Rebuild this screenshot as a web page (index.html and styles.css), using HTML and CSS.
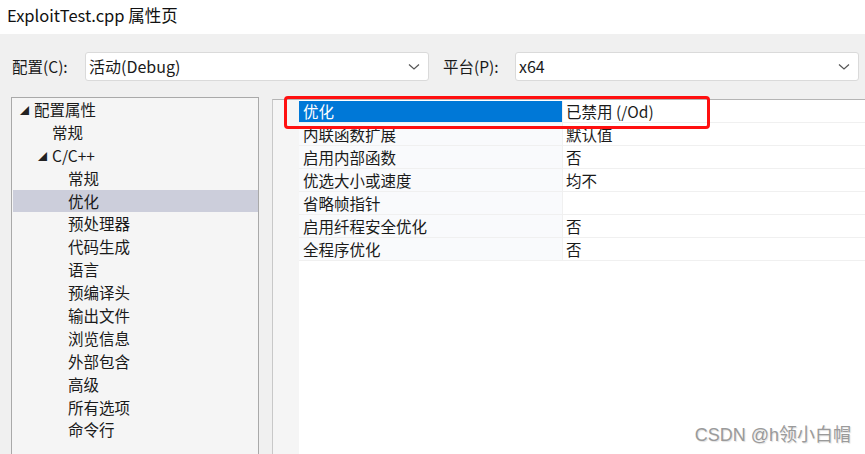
FILE: index.html
```html
<!DOCTYPE html>
<html lang="zh-CN">
<head>
    <meta charset="UTF-8">
    <title>ExploitTest.cpp 属性页</title>
    <link rel="stylesheet" href="styles.css">
</head>
<body>
    <div class="title-bar">ExploitTest.cpp 属性页</div>

    <div class="dialog">
        <div class="config-row">
            <label class="config-label">配置(C):</label>
            <div class="combo combo-config">
                <span>活动(Debug)</span>
                <svg class="chevron" width="12" height="8" viewBox="0 0 12 8"><path d="M1 1.5 L6 6 L11 1.5" fill="none" stroke="#555" stroke-width="1.2"/></svg>
            </div>
            <label class="config-label platform-label">平台(P):</label>
            <div class="combo combo-platform">
                <span>x64</span>
                <svg class="chevron" width="12" height="8" viewBox="0 0 12 8"><path d="M1 1.5 L6 6 L11 1.5" fill="none" stroke="#555" stroke-width="1.2"/></svg>
            </div>
        </div>

        <div class="panels">
            <ul class="tree">
                <li class="lvl0"><span class="arrow">◢</span>配置属性</li>
                <li class="lvl1">常规</li>
                <li class="lvl1"><span class="arrow">◢</span>C/C++</li>
                <li class="lvl2">常规</li>
                <li class="lvl2 active">优化</li>
                <li class="lvl2">预处理器</li>
                <li class="lvl2">代码生成</li>
                <li class="lvl2">语言</li>
                <li class="lvl2">预编译头</li>
                <li class="lvl2">输出文件</li>
                <li class="lvl2">浏览信息</li>
                <li class="lvl2">外部包含</li>
                <li class="lvl2">高级</li>
                <li class="lvl2">所有选项</li>
                <li class="lvl2">命令行</li>
            </ul>

            <div class="grid">
                <div class="prop-row selected">
                    <div class="gutter"></div>
                    <div class="prop-name">优化</div>
                    <div class="prop-value">已禁用 (/Od)</div>
                </div>
                <div class="prop-row">
                    <div class="gutter"></div>
                    <div class="prop-name">内联函数扩展</div>
                    <div class="prop-value">默认值</div>
                </div>
                <div class="prop-row">
                    <div class="gutter"></div>
                    <div class="prop-name">启用内部函数</div>
                    <div class="prop-value">否</div>
                </div>
                <div class="prop-row">
                    <div class="gutter"></div>
                    <div class="prop-name">优选大小或速度</div>
                    <div class="prop-value">均不</div>
                </div>
                <div class="prop-row">
                    <div class="gutter"></div>
                    <div class="prop-name">省略帧指针</div>
                    <div class="prop-value"></div>
                </div>
                <div class="prop-row">
                    <div class="gutter"></div>
                    <div class="prop-name">启用纤程安全优化</div>
                    <div class="prop-value">否</div>
                </div>
                <div class="prop-row">
                    <div class="gutter"></div>
                    <div class="prop-name">全程序优化</div>
                    <div class="prop-value">否</div>
                </div>
                <div class="grid-rest"></div>
                <div class="highlight-box"></div>
            </div>
        </div>

        <div class="watermark">CSDN @h领小白帽</div>
    </div>
</body>
</html>
```

FILE: styles.css
```css
html, body {
    margin: 0;
    height: 100%;
    overflow: hidden;
}
body {
    font-family: "Noto Sans CJK SC", "Liberation Sans", sans-serif;
    color: #1a1a1a;
    background-color: #f0f0f0;
    width: 865px;
}
.title-bar {
    height: 34px;
    line-height: 31px;
    padding-left: 7px;
    font-size: 16.5px;
    background-color: #fff;
    color: #111;
}
.dialog {
    position: relative;
    height: 420px;
    background-color: #f0f0f0;
}
.config-row {
    display: flex;
    align-items: center;
    padding-top: 18px;
    height: 29px;
}
.config-label {
    font-size: 15.5px;
    margin-left: 12px;
    width: 73px;
    margin-top: -2px;
}
.platform-label {
    margin-left: 14px;
    width: 72px;
}
.combo {
    box-sizing: border-box;
    height: 29px;
    background-color: #fff;
    border: 1px solid #dadada;
    border-radius: 3px;
    display: flex;
    align-items: center;
    justify-content: space-between;
    padding: 0 8px 0 3px;
    font-size: 16px;
}
.combo span {
    margin-top: -2px;
}
.combo-config {
    width: 344px;
}
.combo-platform {
    width: 344px;
}
.chevron {
    margin-top: 1px;
}
.panels {
    display: flex;
    margin-top: 16px;
    align-items: flex-start;
}
.tree {
    list-style: none;
    margin: 0 0 0 11px;
    padding: 0 0 22px 1px;
    width: 245px;
    height: 340px;
    background-color: #f5f5f5;
    border: 1px solid #a9a9a9;
    font-size: 15.5px;
}
.tree li {
    height: 22.9px;
    line-height: 22.9px;
    white-space: nowrap;
}
.tree .arrow {
    display: inline-block;
    font-size: 9px;
    width: 14px;
    vertical-align: 2px;
    color: #222;
}
.lvl0 {
    padding-left: 7px;
}
.lvl1 {
    padding-left: 39px;
}
.lvl1 .arrow {
    margin-left: -14px;
}
.lvl2 {
    padding-left: 55px;
}
.tree .active {
    background-color: #cccedb;
}
.grid {
    position: relative;
    margin-left: 13px;
    margin-top: 2px;
    flex: 1;
    height: 360px;
    border-top: 1px solid #b4b4b4;
    border-left: 1px solid #c8c8c8;
    background-color: #fff;
}
.prop-row {
    display: flex;
    height: 23px;
    line-height: 22px;
    font-size: 15.5px;
}
.gutter {
    width: 26px;
    background-color: #f5f5f5;
}
.prop-name {
    box-sizing: border-box;
    width: 264px;
    padding-left: 4px;
    background-color: #f9fafc;
    border-right: 1px solid #f0f0f0;
    border-bottom: 1px solid #f0f0f0;
}
.prop-value {
    flex: 1;
    padding-left: 3px;
    border-bottom: 1px solid #f0f0f0;
}
.selected .prop-name {
    background-color: #0078d7;
    color: #fff;
    margin-top: 1px;
    line-height: 21px;
}
.grid-rest {
    width: 26px;
    height: 199px;
    background-color: #f5f5f5;
}
.highlight-box {
    position: absolute;
    left: 11px;
    top: -4px;
    width: 420px;
    height: 27px;
    border: 3px solid #ff1010;
    border-radius: 4px;
}
.watermark {
    position: absolute;
    right: 14px;
    bottom: 8px;
    font-size: 18px;
    color: #9a9a9a;
    font-family: "Liberation Sans", "Noto Sans CJK SC", sans-serif;
    text-shadow: 1px 1px 1px #e0e0e0;
}
```
